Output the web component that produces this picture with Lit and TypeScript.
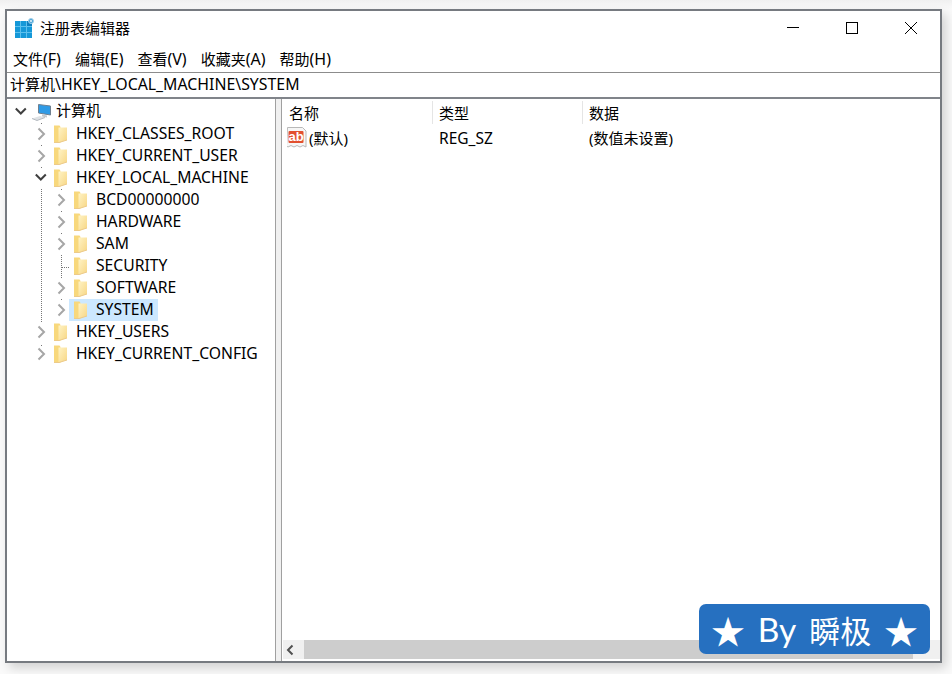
import { LitElement, html, css, svg } from "lit";
import { customElement } from "lit/decorators.js";

const folder = html`<svg class="ico folder" width="13" height="18" viewBox="0 0 13 18">
  <defs><linearGradient id="fg" x1="0" y1="0" x2="1" y2="1"><stop offset="0" stop-color="#fff3c4"/><stop offset="1" stop-color="#f7d684"/></linearGradient></defs>
  <path d="M0 0.500h5.500l1 1.500v15.500H0z" fill="#f8d87c"/>
  <path d="M4.500 2.500H13v12.500l-8.500 3z" fill="url(#fg)"/>
  <path d="M0 17.500h5l8-2.500" fill="none" stroke="#ecca8a" stroke-width="1"/>
</svg>`;

const chevR = html`<svg class="chev" width="12" height="14" viewBox="0 0 12 14"><path d="M3.500 1.500L9 7l-5.500 5.500" fill="none" stroke="#a6a6a6" stroke-width="2"/></svg>`;
const chevD = html`<svg class="chev" width="12" height="14" viewBox="0 0 12 14"><path d="M0.800 3.500l5 5 5-5" fill="none" stroke="#404040" stroke-width="2"/></svg>`;
const noChev = html`<span class="chev"></span>`;

const computer = html`<svg class="ico comp" width="22" height="19" viewBox="0 0 22 19">
  <path d="M6.500 1.500l12 1.500v9l-12-2z" fill="#2f9be6" stroke="#6f8090" stroke-width="1"/>
  <path d="M10 11.500l5 1v2l-5-1z" fill="#c4c8cc"/>
  <path d="M0 15.500l8-2.500 5 1.500-8 3z" fill="#dfe2e5"/>
  <path d="M0 15.500l5 2 8-3" stroke="#b4bac0" fill="none"/>
</svg>`;

const regIcon = html`<svg class="reg" width="22" height="22" viewBox="0 0 22 22">
  <path d="M0.500 0.500h15l3.500 3.500v16l-3-1.500-3 1.500-3-1.500-3 1.500-3-1.500-3 1.500-1.500-1z" fill="#f6f6f6" stroke="#b8b8b8"/>
  <rect x="1.500" y="4" width="15" height="12" rx="1" fill="#e2502f"/>
  <text x="9" y="14" text-anchor="middle" font-family="Liberation Sans" font-weight="700" font-size="13" fill="#fff">ab</text>
</svg>`;

const appIcon = html`<svg width="22" height="22" viewBox="0 0 22 22">
  <rect x="0" y="4" width="17" height="17" fill="#1598d8"/>
  <path d="M0 9.500h17M0 15.500h17M5.500 4v17M11.500 4v17" stroke="#5cc0ee" stroke-width="1"/>
  <path d="M12 4h5v5h-5z" fill="#0d7fc0"/>
  <circle cx="16" cy="4" r="2.500" fill="#4aa3d8" stroke="#9fcfe9"/>
  <circle cx="16" cy="4" r="1" fill="#e8f4fb"/>
</svg>`;

type Row = { label: string; level: number; chev: "r" | "d" | "n"; sel?: boolean };
const rows: Row[] = [
  { label: "HKEY_CLASSES_ROOT", level: 1, chev: "r" },
  { label: "HKEY_CURRENT_USER", level: 1, chev: "r" },
  { label: "HKEY_LOCAL_MACHINE", level: 1, chev: "d" },
  { label: "BCD00000000", level: 2, chev: "r" },
  { label: "HARDWARE", level: 2, chev: "r" },
  { label: "SAM", level: 2, chev: "r" },
  { label: "SECURITY", level: 2, chev: "n" },
  { label: "SOFTWARE", level: 2, chev: "r" },
  { label: "SYSTEM", level: 2, chev: "r", sel: true },
  { label: "HKEY_USERS", level: 1, chev: "r" },
  { label: "HKEY_CURRENT_CONFIG", level: 1, chev: "r" },
];

const menus = [
  ["文件", "(F)"],
  ["编辑", "(E)"],
  ["查看", "(V)"],
  ["收藏夹", "(A)"],
  ["帮助", "(H)"],
];

const guides = svg`
  <path d="M41.500 122v2M41.500 144v2M41.500 166v2M41.500 188v134M41.500 344v2" />
  <path d="M61.500 188v2M61.500 210v2M61.500 232v2M61.500 254v24M62 266.500h8M61.500 298v2" />
`;

@customElement("app-root")
export class AppRoot extends LitElement {
  static styles = css`
    :host {
      display: block;
      width: 952px;
      height: 674px;
      background: #fff;
      font-family: "Noto Sans", "Noto Sans CJK SC", sans-serif;
      font-size: 15px;
      color: #000;
      overflow: hidden;
    }
    .page {
      width: 952px;
      height: 674px;
      padding: 9px 10px 11px 5px;
      box-sizing: border-box;
      background: linear-gradient(#f0f0f0, #fafafa 9px);
    }
    .win {
      position: relative;
      height: 100%;
      box-sizing: border-box;
      border: 2px solid #767a80;
      background: #fff;
      display: flex;
      flex-direction: column;
      box-shadow: 4px 5px 10px rgba(0, 0, 0, 0.16);
    }
    .title {
      height: 34px;
      display: flex;
      align-items: center;
      padding-left: 8px;
      gap: 3px;
      flex: none;
    }
    .title-text { font-size: 15px; padding-bottom: 2px; }
    .ctrls { margin-left: auto; display: flex; }
    .ctrl { width: 59px; height: 34px; display: flex; align-items: center; justify-content: center; }
    .menu {
      height: 27px;
      display: flex;
      align-items: center;
      gap: 14px;
      padding-left: 6px;
      font-size: 15px;
      flex: none;
    }
    .menu .latin { font-size: 16px; }
    .addr {
      border-top: 1px solid #8c8c8c;
      border-bottom: 2px solid #80848a;
      display: flex;
      align-items: center;
      padding: 0 0 3px 3px;
      height: 21px;
      flex: none;
      white-space: pre;
    }
    .addr .latin { font-size: 15.85px; }
    .panes { flex: 1; display: flex; min-height: 0; }
    .tree {
      position: relative;
      width: 268px;
      flex: none;
      border-right: 1px solid #a0a0a0;
      padding-top: 2px;
    }
    .guides {
      position: absolute;
      left: -7px;
      top: -98px;
      width: 280px;
      height: 400px;
      fill: none;
      stroke: #777;
      stroke-dasharray: 1 1;
      pointer-events: none;
    }
    .row { height: 22px; display: flex; align-items: center; position: relative; }
    .chev { width: 12px; height: 14px; flex: none; }
    .ico { flex: none; }
    .row.l0 { padding-left: 8px; }
    .row.l1 { padding-left: 28px; }
    .row.l2 { padding-left: 48px; }
    .row .chev { margin-right: 7px; }
    .row.l0 .chev { margin-right: 5px; }
    .label {
      padding: 0 4px 1px 9px;
      white-space: nowrap;
      line-height: 19px;
      font-size: 15.7px;
    }
    .root-label { padding: 0 0 3px 2px; font-size: 15px; line-height: 19px; }
    .folder { margin-bottom: 1px; }
    .item {
      display: flex;
      align-items: center;
      height: 22px;
      margin-left: -5px;
      padding-left: 5px;
    }
    .item.sel { background: #cce8ff; }
    .split { width: 5px; flex: none; background: #f0f0f0; }
    .list {
      flex: 1;
      min-width: 0;
      border-left: 1px solid #a0a0a0;
      display: flex;
      flex-direction: column;
    }
    .head { height: 25px; display: flex; flex: none; padding-top: 2px; box-sizing: border-box; }
    .hc {
      height: 23px;
      display: flex;
      align-items: center;
      padding: 0 0 0 6px;
      box-sizing: border-box;
      border-right: 1px solid #e5e5e5;
      font-size: 15px;
    }
    .c1 { width: 151px; }
    .c2 { width: 150px; }
    .c3 { border-right: 0; }
    .hc.c1 { padding-left: 7px; }
    .lrow { height: 24px; display: flex; align-items: center; flex: none; margin-top: 1px; }
    .lc { box-sizing: border-box; padding-left: 6px; white-space: nowrap; }
    .lc.c2 { font-size: 15.5px; padding-top: 2px; }
    .lc.c1 { display: flex; align-items: center; padding-left: 5px; }
    .reg { margin-top: 2px; }
    .grow { flex: 1; }
    .hbar {
      height: 19px;
      display: flex;
      flex: none;
      background: #f0f0f0;
      align-items: stretch;
      margin: 0 0 2px 1px;
    }
    .arrow { width: 21px; display: flex; align-items: center; flex: none; padding-left: 2px; box-sizing: border-box; }
    .thumb { width: 609px; background: #cdcdcd; }
    .badge {
      position: absolute;
      right: 10px;
      bottom: 7px;
      width: 231px;
      height: 50px;
      border-radius: 7px;
      background: #2670c0;
      color: #fff;
      display: flex;
      gap: 13px;
      align-items: center;
      justify-content: center;
      font-family: "Lato", "Noto Sans CJK SC", sans-serif;
      font-size: 33.500px;
      white-space: pre;
    }
    .cjk { font-size: 31px; }
  `;

  render() {
    return html`<div class="page">
      <div class="win">
        <div class="title">
          ${appIcon}<span class="title-text">注册表编辑器</span>
          <div class="ctrls">
            <div class="ctrl"><svg width="12" height="12" viewBox="0 0 12 12"><path d="M0 5.500h12" stroke="#000"/></svg></div>
            <div class="ctrl"><svg width="12" height="12" viewBox="0 0 12 12"><rect x=".5" y=".5" width="11" height="11" fill="none" stroke="#000"/></svg></div>
            <div class="ctrl"><svg width="12" height="12" viewBox="0 0 12 12"><path d="M0 0l12 12M12 0L0 12" stroke="#000"/></svg></div>
          </div>
        </div>
        <div class="menu">
          ${menus.map(([a, b]) => html`<span>${a}<span class="latin">${b}</span></span>`)}
        </div>
        <div class="addr">计算机<span class="latin">\\HKEY_LOCAL_MACHINE\\SYSTEM</span></div>
        <div class="panes">
          <div class="tree">
            <svg class="guides" viewBox="0 0 280 400">${guides}</svg>
            <div class="row l0">${chevD}${computer}<span class="root-label">计算机</span></div>
            ${rows.map(
              (r) => html`<div class="row l${r.level}">
                ${r.chev === "r" ? chevR : r.chev === "d" ? chevD : noChev}
                <div class="item ${r.sel ? "sel" : ""}">${folder}<span class="label">${r.label}</span></div>
              </div>`
            )}
          </div>
          <div class="split"></div>
          <div class="list">
            <div class="head">
              <div class="hc c1">名称</div>
              <div class="hc c2">类型</div>
              <div class="hc c3 grow">数据</div>
            </div>
            <div class="lrow">
              <div class="lc c1">${regIcon}<span>(默认)</span></div>
              <div class="lc c2">REG_SZ</div>
              <div class="lc">(数值未设置)</div>
            </div>
            <div class="grow"></div>
            <div class="hbar">
              <div class="arrow"><svg width="10" height="12" viewBox="0 0 10 12"><path d="M7.500 1.500L3 6l4.500 4.500" fill="none" stroke="#505050" stroke-width="2"/></svg></div>
              <div class="thumb"></div>
            </div>
          </div>
        </div>
        <div class="badge"><span>★</span><span>By</span><span class="cjk">瞬极</span><span>★</span></div>
      </div>
    </div>`;
  }
}
